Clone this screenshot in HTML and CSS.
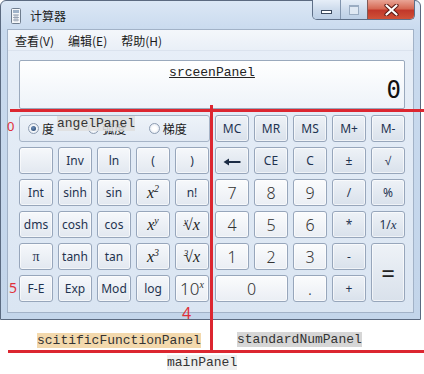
FILE: index.html
```html
<!DOCTYPE html>
<html lang="zh-CN">

  <head>
    <meta charset="UTF-8">
    <meta name="viewport" content="width=device-width, initial-scale=1.0">
    <title>计算器</title>
    <link rel="stylesheet" href="styles.css">
  </head>

  <body>
    <div class="window">
      <div class="titlebar">
        <svg class="app-icon" width="10" height="16" viewBox="0 0 10 16">
          <rect x="0.5" y="0.5" width="9" height="15" rx="1" fill="#f4f6f8" stroke="#6f7d8e"/>
          <rect x="2" y="2" width="6" height="3" fill="#9fb2c8"/>
          <path d="M2 7h6M2 9.5h6M2 12h6M4 6.5v7M6 6.5v7" stroke="#8a97a8" stroke-width="0.8"/>
        </svg>
        <span class="title">计算器</span>
        <div class="controls">
          <div class="ctl min"><span class="bar"></span></div>
          <div class="ctl max"><span class="box"></span></div>
          <div class="ctl close">
            <svg width="15" height="12" viewBox="0 0 15 12">
              <path d="M2.5 1.5L12.5 10.5M12.5 1.5L2.5 10.5" stroke="#5a1a14" stroke-width="4.2" stroke-linecap="round"/>
              <path d="M2.5 1.5L12.5 10.5M12.5 1.5L2.5 10.5" stroke="#fff" stroke-width="2.2" stroke-linecap="round"/>
            </svg>
          </div>
        </div>
      </div>

      <div class="client">
        <div class="menubar">
          <span>查看(V)</span>
          <span>编辑(E)</span>
          <span>帮助(H)</span>
        </div>

        <div class="calc">
          <div class="screen">
            <div class="screen-label">srceenPanel</div>
            <div class="screen-value">0</div>
          </div>

          <div class="keypad">
            <div class="sci-keys">
              <div class="angle">
                <label class="radio checked"><span class="dot"></span>度</label>
                <label class="radio"><span class="dot"></span>弧度</label>
                <label class="radio"><span class="dot"></span>梯度</label>
              </div>

              <button class="key"></button>
              <button class="key">Inv</button>
              <button class="key">ln</button>
              <button class="key">(</button>
              <button class="key">)</button>

              <button class="key">Int</button>
              <button class="key">sinh</button>
              <button class="key">sin</button>
              <button class="key math">x<sup>2</sup></button>
              <button class="key">n!</button>

              <button class="key">dms</button>
              <button class="key">cosh</button>
              <button class="key">cos</button>
              <button class="key math">x<sup>y</sup></button>
              <button class="key math"><span class="idx">y</span>√x</button>

              <button class="key serif">π</button>
              <button class="key">tanh</button>
              <button class="key">tan</button>
              <button class="key math">x<sup>3</sup></button>
              <button class="key math"><span class="idx">3</span>√x</button>

              <button class="key">F-E</button>
              <button class="key">Exp</button>
              <button class="key">Mod</button>
              <button class="key">log</button>
              <button class="key num ten">10<sup class="sup-x">x</sup></button>
            </div>

            <div class="std-keys">
              <button class="key op">MC</button>
              <button class="key op">MR</button>
              <button class="key op">MS</button>
              <button class="key op">M+</button>
              <button class="key op">M-</button>

              <button class="key op">
                <svg class="back" width="18" height="8" viewBox="0 0 18 8">
                  <path d="M0.5 4L6 0.5V3H17.5V5H6V7.5Z" fill="#1c2c44"/>
                </svg>
              </button>
              <button class="key op">CE</button>
              <button class="key op">C</button>
              <button class="key op">±</button>
              <button class="key op">√</button>

              <button class="key num">7</button>
              <button class="key num">8</button>
              <button class="key num">9</button>
              <button class="key op">/</button>
              <button class="key op">%</button>

              <button class="key num">4</button>
              <button class="key num">5</button>
              <button class="key num">6</button>
              <button class="key op">*</button>
              <button class="key op">1/<i class="ix">x</i></button>

              <button class="key num">1</button>
              <button class="key num">2</button>
              <button class="key num">3</button>
              <button class="key op">-</button>
              <button class="key op equals">=</button>

              <button class="key num zero">0</button>
              <button class="key num">.</button>
              <button class="key op">+</button>
            </div>
          </div>
        </div>
      </div>
    </div>

    <!-- annotations drawn over the screenshot -->
    <div class="line line-top"></div>
    <div class="line line-mid"></div>
    <div class="line line-bottom"></div>
    <span class="num-mark mark-0">0</span>
    <span class="num-mark mark-5">5</span>
    <span class="num-mark mark-4">4</span>
    <span class="tag tag-angle">angelPanel</span>
    <span class="tag tag-sci">scitificFunctionPanel</span>
    <span class="tag tag-std">standardNumPanel</span>
    <span class="tag tag-main">mainPanel</span>
  </body>

</html>
```

FILE: styles.css
```css
body {
  margin: 0;
  width: 424px;
  height: 374px;
  position: relative;
  overflow: hidden;
  background-color: #fff;
  font-family: "Noto Sans", "Noto Sans CJK SC", sans-serif;
}

.window {
  width: 421px;
  height: 320px;
  box-sizing: border-box;
  border: 1px solid #5b6a80;
  border-radius: 6px 6px 0 0;
  background: linear-gradient(#dbe7f5, #c9daee 30px, #c3d5ea);
  padding: 0 6px 6px;
  display: flex;
  flex-direction: column;
}

.titlebar {
  height: 28px;
  display: flex;
  align-items: center;
  flex-shrink: 0;
}

.app-icon {
  margin-left: 4px;
  margin-top: 1px;
}

.title {
  margin-left: 9px;
  font: 12px "Noto Sans CJK SC", sans-serif;
  color: #1b1b1b;
}

.controls {
  margin-left: auto;
  margin-right: -1px;
  align-self: flex-start;
  margin-top: -1px;
  display: flex;
  height: 19px;
  border: 1px solid #5e6f88;
  border-top: none;
  border-radius: 0 0 5px 5px;
  overflow: hidden;
}

.ctl {
  display: flex;
  align-items: center;
  justify-content: center;
  background: linear-gradient(#e6eef8, #cddbec 50%, #bccfe6);
}

.ctl.min {
  width: 27px;
  border-right: 1px solid #8194ad;
}

.ctl.min .bar {
  width: 9px;
  height: 2px;
  margin-top: 5px;
  background-color: #fff;
  border: 1px solid #3c4a5f;
}

.ctl.max {
  width: 26px;
  border-right: 1px solid #7e5a58;
}

.ctl.max .box {
  width: 8px;
  height: 7px;
  border: 1px solid #9aacc2;
  border-top-width: 2px;
  background-color: #dfe8f3;
}

.ctl.close {
  width: 46px;
  background: linear-gradient(#e9a596, #d66a55 45%, #c2382a 55%, #d05238);
}

.client {
  flex: 1;
  border: 1px solid #a2b2c7;
  display: flex;
  flex-direction: column;
  background: linear-gradient(#e8eff8, #dae5f2);
}

.menubar {
  height: 20px;
  display: flex;
  align-items: center;
  background: linear-gradient(#f4f7fb, #e9eff7);
  border-bottom: 1px solid #dbe3ee;
  font: 12px "Noto Sans CJK SC", sans-serif;
  color: #1b1b1b;
}

.menubar span {
  padding: 0 7px;
}

.calc {
  padding: 9px 0 0 11px;
}

.screen {
  width: 386px;
  height: 49px;
  box-sizing: border-box;
  border: 1px solid #9aa9bd;
  border-radius: 2px;
  background: linear-gradient(#ffffff, #eef3f9);
  padding: 5px 3px 0 0;
}

.screen-label {
  text-align: center;
  font: 13px/14px "Liberation Mono", monospace;
  color: #222;
  text-decoration: underline;
  padding-left: 3px;
}

.screen-value {
  text-align: right;
  font: 24px/20px "DejaVu Sans Mono", monospace;
  color: #111;
}

.keypad {
  margin-top: 6px;
  display: flex;
  gap: 6px;
}

.sci-keys,
.std-keys {
  display: grid;
  grid-template-columns: repeat(5, 34px);
  grid-template-rows: repeat(6, 27px);
  gap: 5px;
}

.angle {
  grid-column: 1 / -1;
  margin-right: -1px;
  border: 1px solid #a6b4c7;
  border-radius: 3px;
  background: linear-gradient(#eef3f9, #e1e9f3);
  display: flex;
  align-items: center;
  padding-left: 8px;
}

.radio {
  width: 65px;
  display: flex;
  align-items: center;
  font: 12px "Noto Sans CJK SC", sans-serif;
  color: #1b1b1b;
}

.radio .dot {
  width: 11px;
  height: 11px;
  box-sizing: border-box;
  border-radius: 50%;
  border: 1px solid #8e9db2;
  background: radial-gradient(#ffffff 30%, #d9e1ec);
  margin-right: 3px;
  display: flex;
  align-items: center;
  justify-content: center;
}

.radio.checked .dot::after {
  content: "";
  width: 5px;
  height: 5px;
  border-radius: 50%;
  background: radial-gradient(circle at 40% 35%, #6f90bb, #1c3b63);
}

.key {
  font: 12px "Noto Sans", sans-serif;
  color: #1f3350;
  border: 1px solid #97a6bb;
  border-radius: 3px;
  background: linear-gradient(#f6f8fb, #e2e8f0);
  box-shadow: inset 0 0 0 1px rgba(255, 255, 255, 0.6);
  padding: 0;
  white-space: nowrap;
}

.key.op {
  background: linear-gradient(#eef2f7, #d9e1eb);
}

.key.num {
  font-size: 16px;
  font-weight: 300;
  color: #333;
  background: linear-gradient(#fbfcfd, #eaeef4);
}

.key.ten {
  font-size: 17px;
}

.key.math {
  font: italic 16px "Liberation Serif", serif;
  color: #222;
}

.key.serif {
  font: 14px "Liberation Serif", serif;
}

.key sup {
  font-size: 10px;
  line-height: 0;
  vertical-align: 6px;
}

.key .sup-x {
  font: italic 10px "Liberation Serif", serif;
  vertical-align: 7px;
}

.key .idx {
  font-size: 9px;
  line-height: 0;
  vertical-align: 6px;
  margin-right: -4px;
}

.key .ix {
  font-family: "Liberation Serif", serif;
  font-size: 13px;
}

.key .back {
  vertical-align: middle;
}

.key.equals {
  grid-row: span 2;
  font-size: 24px;
  color: #222;
}

.key.zero {
  grid-column: span 2;
}

/* annotation overlay */
.line {
  position: absolute;
  background-color: #dc2630;
}

.line-top {
  left: 10px;
  top: 109px;
  width: 414px;
  height: 3px;
}

.line-mid {
  left: 210px;
  top: 105px;
  width: 3px;
  height: 248px;
}

.line-bottom {
  left: 8px;
  top: 350px;
  width: 416px;
  height: 3px;
}

.num-mark {
  position: absolute;
  color: #e0303a;
  font-family: "Noto Sans", sans-serif;
}

.mark-0 {
  left: 7px;
  top: 117px;
  font-size: 13px;
}

.mark-5 {
  left: 9px;
  top: 278px;
  font-size: 14px;
}

.mark-4 {
  left: 182px;
  top: 302px;
  font-size: 16px;
}

.tag {
  position: absolute;
  font: 13px/15px "Liberation Mono", monospace;
  color: #333;
}

.tag-angle {
  left: 57px;
  top: 116px;
  background-color: rgba(222, 222, 222, 0.85);
}

.tag-sci {
  left: 37px;
  top: 333px;
  background-color: #f3d9ad;
}

.tag-std {
  left: 237px;
  top: 332px;
  background-color: #d6d6d6;
}

.tag-main {
  left: 167px;
  top: 355px;
  background-color: #efefef;
}
```
